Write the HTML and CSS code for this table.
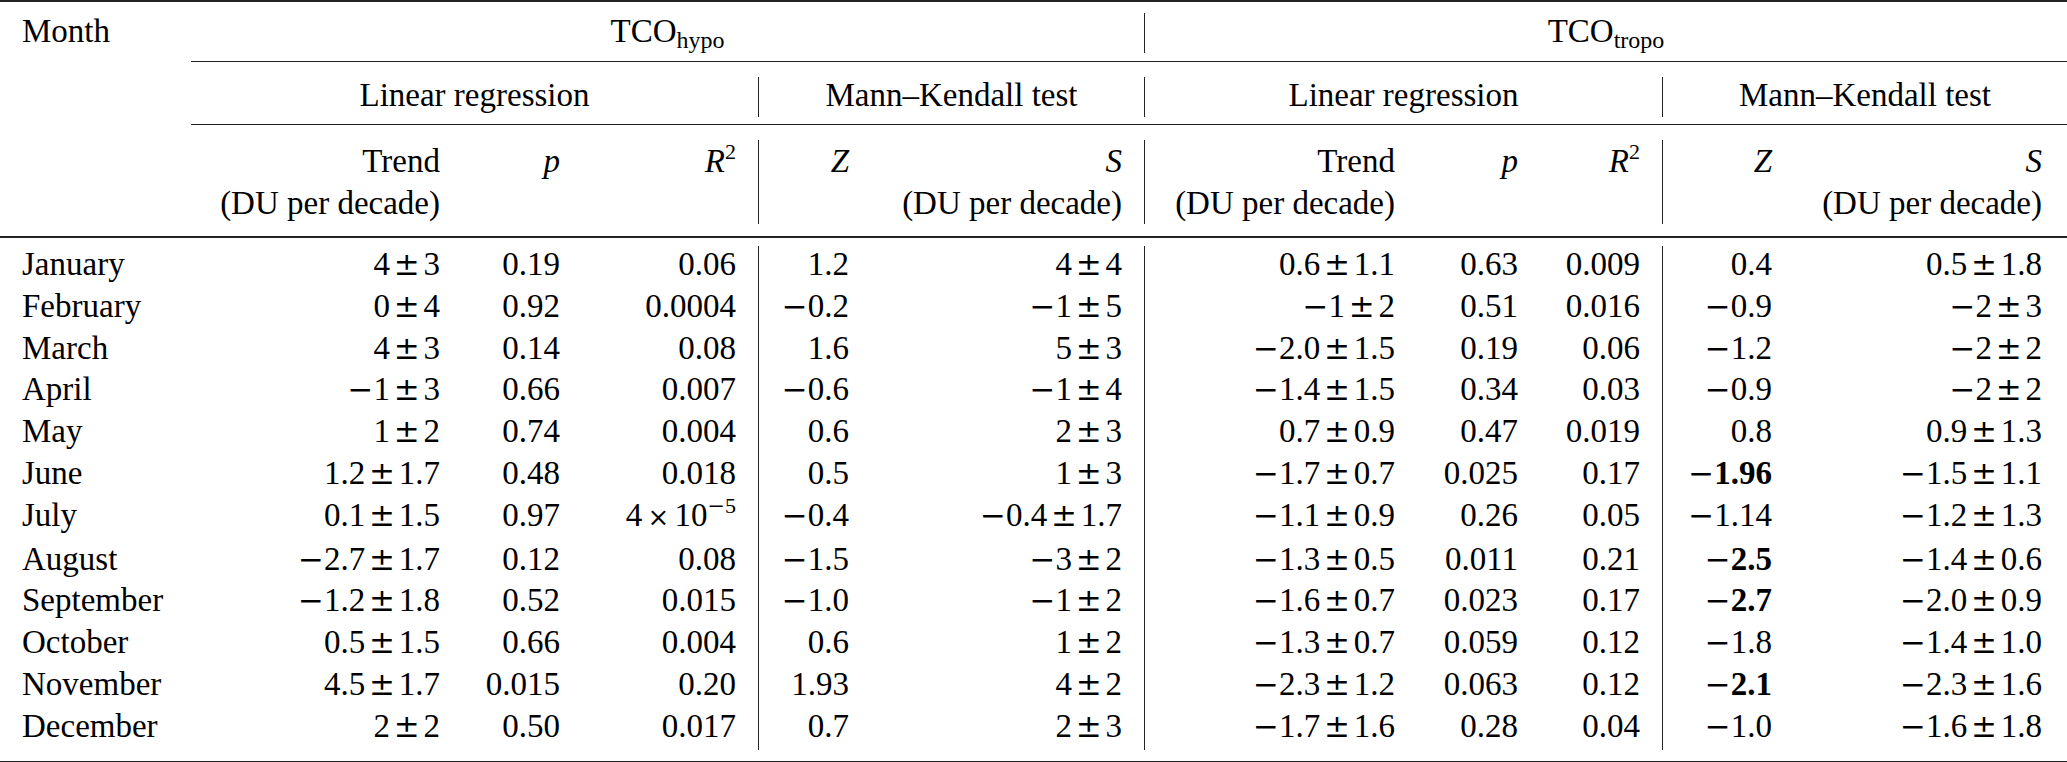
FILE: index.html
```html
<!DOCTYPE html>
<html lang="en">
<head>
<meta charset="utf-8">
<title>TCO trends</title>
<link rel="stylesheet" href="styles.css">
</head>
<body>
<div class="tbl">
  <div class="rule top"></div>

  <div class="c m h1">Month</div>
  <div class="c ctr h1 g-hypo">TCO<sub class="sb">hypo</sub></div>
  <div class="c ctr h1 g-tropo bl">TCO<sub class="sb">tropo</sub></div>

  <div class="rule cmid first"></div>

  <div class="c ctr h1 g-lr1">Linear regression</div>
  <div class="c ctr h1 g-mk1 bl">Mann–Kendall test</div>
  <div class="c ctr h1 g-lr2 bl">Linear regression</div>
  <div class="c ctr h1 g-mk2 bl">Mann–Kendall test</div>

  <div class="rule cmid second"></div>

  <div class="c h3 c2">Trend<br>(DU per decade)</div>
  <div class="c h3"><i>p</i></div>
  <div class="c h3"><i>R</i><sup class="sp">2</sup></div>
  <div class="c h3 bl"><i>Z</i></div>
  <div class="c h3"><i>S</i><br>(DU per decade)</div>
  <div class="c h3 bl">Trend<br>(DU per decade)</div>
  <div class="c h3"><i>p</i></div>
  <div class="c h3"><i>R</i><sup class="sp">2</sup></div>
  <div class="c h3 bl"><i>Z</i></div>
  <div class="c h3 last"><i>S</i><br>(DU per decade)</div>

  <div class="rule mid"></div>

  <div class="c m">January</div>
  <div class="c">4<span class="pm">±</span>3</div>
  <div class="c">0.19</div>
  <div class="c">0.06</div>
  <div class="c bl">1.2</div>
  <div class="c">4<span class="pm">±</span>4</div>
  <div class="c bl">0.6<span class="pm">±</span>1.1</div>
  <div class="c">0.63</div>
  <div class="c">0.009</div>
  <div class="c bl">0.4</div>
  <div class="c last">0.5<span class="pm">±</span>1.8</div>

  <div class="c m">February</div>
  <div class="c">0<span class="pm">±</span>4</div>
  <div class="c">0.92</div>
  <div class="c">0.0004</div>
  <div class="c bl"><span class="mi">−</span>0.2</div>
  <div class="c"><span class="mi">−</span>1<span class="pm">±</span>5</div>
  <div class="c bl"><span class="mi">−</span>1<span class="pm">±</span>2</div>
  <div class="c">0.51</div>
  <div class="c">0.016</div>
  <div class="c bl"><span class="mi">−</span>0.9</div>
  <div class="c last"><span class="mi">−</span>2<span class="pm">±</span>3</div>

  <div class="c m">March</div>
  <div class="c">4<span class="pm">±</span>3</div>
  <div class="c">0.14</div>
  <div class="c">0.08</div>
  <div class="c bl">1.6</div>
  <div class="c">5<span class="pm">±</span>3</div>
  <div class="c bl"><span class="mi">−</span>2.0<span class="pm">±</span>1.5</div>
  <div class="c">0.19</div>
  <div class="c">0.06</div>
  <div class="c bl"><span class="mi">−</span>1.2</div>
  <div class="c last"><span class="mi">−</span>2<span class="pm">±</span>2</div>

  <div class="c m">April</div>
  <div class="c"><span class="mi">−</span>1<span class="pm">±</span>3</div>
  <div class="c">0.66</div>
  <div class="c">0.007</div>
  <div class="c bl"><span class="mi">−</span>0.6</div>
  <div class="c"><span class="mi">−</span>1<span class="pm">±</span>4</div>
  <div class="c bl"><span class="mi">−</span>1.4<span class="pm">±</span>1.5</div>
  <div class="c">0.34</div>
  <div class="c">0.03</div>
  <div class="c bl"><span class="mi">−</span>0.9</div>
  <div class="c last"><span class="mi">−</span>2<span class="pm">±</span>2</div>

  <div class="c m">May</div>
  <div class="c">1<span class="pm">±</span>2</div>
  <div class="c">0.74</div>
  <div class="c">0.004</div>
  <div class="c bl">0.6</div>
  <div class="c">2<span class="pm">±</span>3</div>
  <div class="c bl">0.7<span class="pm">±</span>0.9</div>
  <div class="c">0.47</div>
  <div class="c">0.019</div>
  <div class="c bl">0.8</div>
  <div class="c last">0.9<span class="pm">±</span>1.3</div>

  <div class="c m">June</div>
  <div class="c">1.2<span class="pm">±</span>1.7</div>
  <div class="c">0.48</div>
  <div class="c">0.018</div>
  <div class="c bl">0.5</div>
  <div class="c">1<span class="pm">±</span>3</div>
  <div class="c bl"><span class="mi">−</span>1.7<span class="pm">±</span>0.7</div>
  <div class="c">0.025</div>
  <div class="c">0.17</div>
  <div class="c bl"><span class="mi">−</span><b>1.96</b></div>
  <div class="c last"><span class="mi">−</span>1.5<span class="pm">±</span>1.1</div>

  <div class="c m">July</div>
  <div class="c">0.1<span class="pm">±</span>1.5</div>
  <div class="c">0.97</div>
  <div class="c">4<span class="tm">×</span>10<sup class="sp"><span class="mi">−</span>5</sup></div>
  <div class="c bl"><span class="mi">−</span>0.4</div>
  <div class="c"><span class="mi">−</span>0.4<span class="pm">±</span>1.7</div>
  <div class="c bl"><span class="mi">−</span>1.1<span class="pm">±</span>0.9</div>
  <div class="c">0.26</div>
  <div class="c">0.05</div>
  <div class="c bl"><span class="mi">−</span>1.14</div>
  <div class="c last"><span class="mi">−</span>1.2<span class="pm">±</span>1.3</div>

  <div class="c m">August</div>
  <div class="c"><span class="mi">−</span>2.7<span class="pm">±</span>1.7</div>
  <div class="c">0.12</div>
  <div class="c">0.08</div>
  <div class="c bl"><span class="mi">−</span>1.5</div>
  <div class="c"><span class="mi">−</span>3<span class="pm">±</span>2</div>
  <div class="c bl"><span class="mi">−</span>1.3<span class="pm">±</span>0.5</div>
  <div class="c">0.011</div>
  <div class="c">0.21</div>
  <div class="c bl"><span class="mi">−</span><b>2.5</b></div>
  <div class="c last"><span class="mi">−</span>1.4<span class="pm">±</span>0.6</div>

  <div class="c m">September</div>
  <div class="c"><span class="mi">−</span>1.2<span class="pm">±</span>1.8</div>
  <div class="c">0.52</div>
  <div class="c">0.015</div>
  <div class="c bl"><span class="mi">−</span>1.0</div>
  <div class="c"><span class="mi">−</span>1<span class="pm">±</span>2</div>
  <div class="c bl"><span class="mi">−</span>1.6<span class="pm">±</span>0.7</div>
  <div class="c">0.023</div>
  <div class="c">0.17</div>
  <div class="c bl"><span class="mi">−</span><b>2.7</b></div>
  <div class="c last"><span class="mi">−</span>2.0<span class="pm">±</span>0.9</div>

  <div class="c m">October</div>
  <div class="c">0.5<span class="pm">±</span>1.5</div>
  <div class="c">0.66</div>
  <div class="c">0.004</div>
  <div class="c bl">0.6</div>
  <div class="c">1<span class="pm">±</span>2</div>
  <div class="c bl"><span class="mi">−</span>1.3<span class="pm">±</span>0.7</div>
  <div class="c">0.059</div>
  <div class="c">0.12</div>
  <div class="c bl"><span class="mi">−</span>1.8</div>
  <div class="c last"><span class="mi">−</span>1.4<span class="pm">±</span>1.0</div>

  <div class="c m">November</div>
  <div class="c">4.5<span class="pm">±</span>1.7</div>
  <div class="c">0.015</div>
  <div class="c">0.20</div>
  <div class="c bl">1.93</div>
  <div class="c">4<span class="pm">±</span>2</div>
  <div class="c bl"><span class="mi">−</span>2.3<span class="pm">±</span>1.2</div>
  <div class="c">0.063</div>
  <div class="c">0.12</div>
  <div class="c bl"><span class="mi">−</span><b>2.1</b></div>
  <div class="c last"><span class="mi">−</span>2.3<span class="pm">±</span>1.6</div>

  <div class="c m">December</div>
  <div class="c">2<span class="pm">±</span>2</div>
  <div class="c">0.50</div>
  <div class="c">0.017</div>
  <div class="c bl">0.7</div>
  <div class="c">2<span class="pm">±</span>3</div>
  <div class="c bl"><span class="mi">−</span>1.7<span class="pm">±</span>1.6</div>
  <div class="c">0.28</div>
  <div class="c">0.04</div>
  <div class="c bl"><span class="mi">−</span>1.0</div>
  <div class="c last"><span class="mi">−</span>1.6<span class="pm">±</span>1.8</div>

  <div class="rule bottom"></div>
</div>
</body>
</html>
```

FILE: styles.css
```css
html, body {
  margin: 0;
  padding: 0;
  background: #ffffff;
}

body {
  font-family: "Liberation Serif", "Times New Roman", serif;
  font-size: 33px;
  color: #000000;
}

.tbl {
  display: grid;
  grid-template-columns: 191px 271px 120px 176px 113px 273px 273px 123px 122px 132px 273px;
  width: 2067px;
}

.c {
  box-sizing: border-box;
  padding: 0 22px 5.3px 22px;
  line-height: 36.5px;
  text-align: right;
  white-space: nowrap;
}

.c.m {
  text-align: left;
  grid-column: 1;
}

.c.ctr {
  text-align: center;
  padding-left: 0;
  padding-right: 0;
}

.c.last {
  padding-right: 25px;
}

.c.h1 {
  padding-bottom: 3.5px;
}

.c.h3 {
  line-height: 42px;
  padding-bottom: 0;
}

.c.c2 {
  grid-column: 2;
}

.bl {
  border-left: 1.5px solid #222222;
}

.g-hypo { grid-column: 2 / 7; }
.g-tropo { grid-column: 7 / 12; }
.g-lr1 { grid-column: 2 / 5; }
.g-mk1 { grid-column: 5 / 7; }
.g-lr2 { grid-column: 7 / 10; }
.g-mk2 { grid-column: 10 / 12; }

.rule {
  background: #222222;
}

.rule.top {
  grid-column: 1 / -1;
  height: 2px;
  margin-bottom: 10.6px;
}

.rule.cmid {
  grid-column: 2 / -1;
  height: 1.5px;
  margin-bottom: 14.5px;
}

.rule.cmid.first {
  margin-top: 8.4px;
}

.rule.cmid.second {
  margin-top: 7px;
}

.rule.mid {
  grid-column: 1 / -1;
  height: 2px;
  margin-top: 12px;
  margin-bottom: 8px;
}

.rule.bottom {
  grid-column: 1 / -1;
  height: 3px;
  margin-top: 11.4px;
}

.sb {
  font-size: 24px;
  vertical-align: -6px;
  line-height: 0;
}

.sp {
  font-size: 22px;
  vertical-align: 13px;
  line-height: 0;
}

.pm {
  font-family: "DejaVu Serif", serif;
  font-size: 31px;
  margin: 0 0.12em;
}

.mi {
  font-family: "DejaVu Serif", serif;
  font-size: 31px;
}

.sp .mi {
  font-size: 21px;
}

.tm {
  font-family: "DejaVu Serif", serif;
  font-size: 26px;
  margin: 0 0.2em;
}

i {
  font-style: italic;
}

b {
  font-weight: bold;
}
```
